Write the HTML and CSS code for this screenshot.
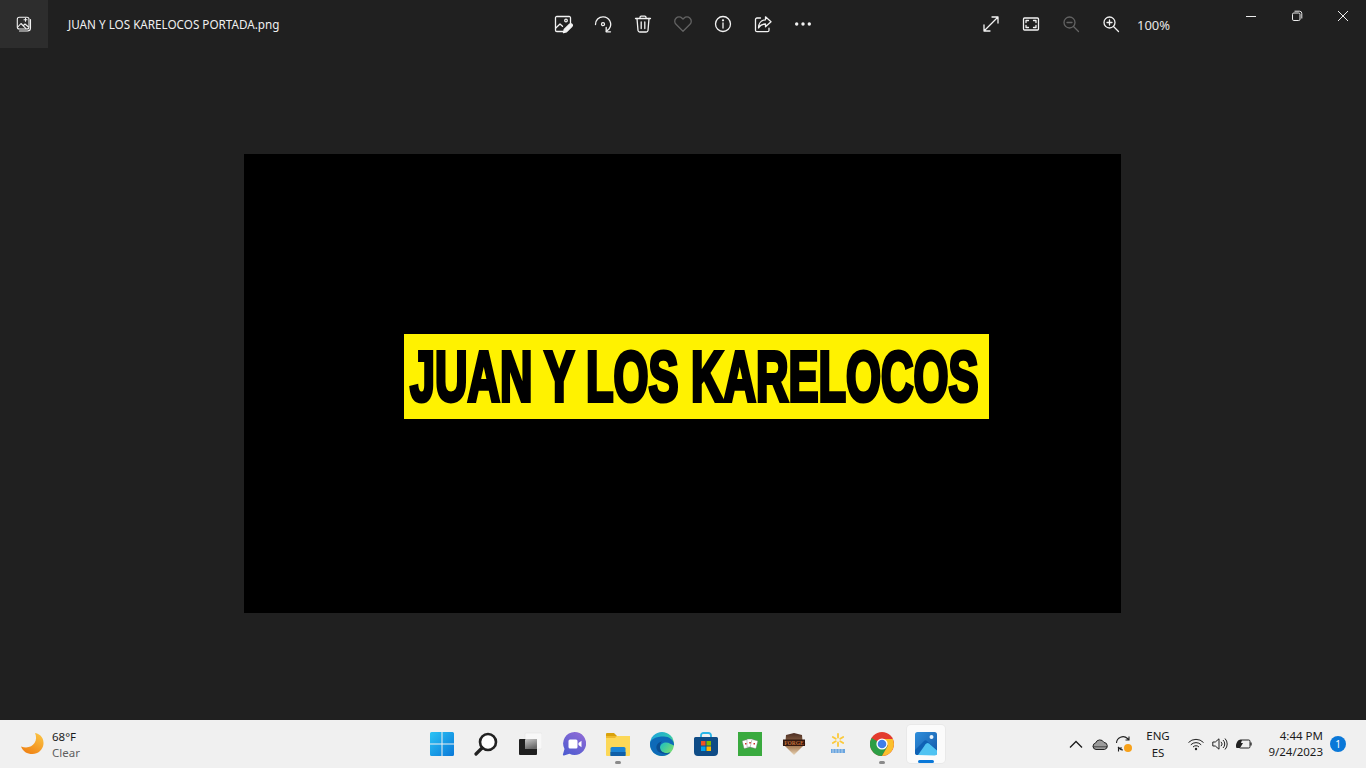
FILE: index.html
```html
<!DOCTYPE html>
<html lang="en">

<head>
  <meta charset="UTF-8" />
  <title>JUAN Y LOS KARELOCOS PORTADA.png</title>
  <link rel="stylesheet" href="styles.css">
</head>

<body>
  <div class="window">
    <header class="titlebar">
      <div class="app-icon">
        <svg width="20" height="20" viewBox="0 0 20 20" class="line small">
          <rect x="3.300" y="3.300" width="11.700" height="11.700" rx="2" />
          <path d="M3.800 13l3.200-3.500 5 5.200M9.500 11.500l1.500-1.500 3.500 3" />
          <path d="M11.500 4.200v3M10 5.700h3" />
          <path d="M5.500 17h8a3 3 0 0 0 3-3V5.500" />
        </svg>
      </div>
      <div class="file-name">JUAN Y LOS KARELOCOS PORTADA.png</div>

      <div class="tools">
        <button class="tool">
          <svg width="20" height="20" viewBox="0 0 20 20" class="line">
            <path d="M10 17.500H3.800a1.300 1.300 0 0 1-1.300-1.300V3.800a1.300 1.300 0 0 1 1.300-1.300h12.400a1.300 1.300 0 0 1 1.300 1.300V9" />
            <path d="M2.800 14l4.200-4 2.500 2.300" />
            <circle cx="13" cy="6.500" r="1.300" />
            <path d="M10.500 18.500l.7-3 5.300-5.300a1.500 1.500 0 0 1 2.300 2.300l-5.300 5.300z" fill="#f2f2f2" />
          </svg>
        </button>
        <button class="tool">
          <svg width="20" height="20" viewBox="0 0 20 20" class="line">
            <path d="M2.500 10.500A7.500 7.500 0 0 1 10 2.800a7.500 7.500 0 0 1 6 12.200l-2.600 2.300" />
            <path d="M13.200 13.500v4.300h4.300" />
            <circle cx="10" cy="10.200" r="1.500" />
          </svg>
        </button>
        <button class="tool">
          <svg width="20" height="20" viewBox="0 0 20 20" class="line">
            <path d="M2.500 4.500h15M7 4.500V3.300a1.200 1.200 0 0 1 1.200-1.200h3.600A1.200 1.200 0 0 1 13 3.300v1.200" />
            <path d="M4 4.500l1 12a1.800 1.800 0 0 0 1.800 1.500h6.400a1.800 1.800 0 0 0 1.800-1.500l1-12" />
            <path d="M8.200 8v6.500M11.800 8v6.500" />
          </svg>
        </button>
        <button class="tool">
          <svg width="20" height="20" viewBox="0 0 20 20" class="line dim">
            <path d="M10 17.300L3 10.300a4.300 4.300 0 0 1 0-6.100 4.300 4.300 0 0 1 6.100 0l.9.900.9-.9a4.300 4.300 0 0 1 6.100 0 4.300 4.300 0 0 1 0 6.100z" />
          </svg>
        </button>
        <button class="tool">
          <svg width="20" height="20" viewBox="0 0 20 20" class="line">
            <circle cx="10" cy="10" r="7.500" />
            <path d="M10 9v5" />
            <circle cx="10" cy="6.300" r=".5" />
          </svg>
        </button>
        <button class="tool">
          <svg width="20" height="20" viewBox="0 0 20 20" class="line">
            <path d="M7.500 4H4a1.500 1.500 0 0 0-1.500 1.500v10.700A1.500 1.500 0 0 0 4 17.700h10.500a1.500 1.500 0 0 0 1.500-1.500v-2" />
            <path d="M12.500 2.800l5.500 5-5.500 5V10c-3 0-5.300.800-7 4 0-4.500 2.500-8 7-8.200z" />
          </svg>
        </button>
        <button class="tool">
          <svg width="20" height="20" viewBox="0 0 20 20">
            <circle cx="3.700" cy="10" r="1.700" fill="#f2f2f2" />
            <circle cx="10" cy="10" r="1.700" fill="#f2f2f2" />
            <circle cx="16.300" cy="10" r="1.700" fill="#f2f2f2" />
          </svg>
        </button>
      </div>

      <div class="view-tools">
        <button class="tool">
          <svg width="20" height="20" viewBox="0 0 20 20" class="line">
            <path d="M3 17L17 3M11 3h6v6M3 11v6h6" />
          </svg>
        </button>
        <button class="tool">
          <svg width="20" height="20" viewBox="0 0 20 20" class="line">
            <rect x="2.500" y="4" width="15" height="12" rx="1" />
            <path d="M5 8.500V6.500h2.500M12.500 6.500H15v2M15 11.500v2h-2.500M7.500 13.500H5v-2" />
          </svg>
        </button>
        <button class="tool">
          <svg width="20" height="20" viewBox="0 0 20 20" class="line dim">
            <circle cx="8.500" cy="8.500" r="5.500" />
            <path d="M12.500 12.500l5 5M6 8.500h5" />
          </svg>
        </button>
        <button class="tool">
          <svg width="20" height="20" viewBox="0 0 20 20" class="line">
            <circle cx="8.500" cy="8.500" r="5.500" />
            <path d="M12.500 12.500l5 5M6 8.500h5M8.500 6v5" />
          </svg>
        </button>
        <span class="zoom-level">100%</span>
      </div>

      <div class="window-controls">
        <button class="win-btn">
          <svg width="12" height="12" viewBox="0 0 12 12" class="thin"><path d="M1 6.500h10" /></svg>
        </button>
        <button class="win-btn">
          <svg width="12" height="12" viewBox="0 0 12 12" class="thin">
            <rect x="1.500" y="3" width="7.500" height="7.500" rx="1.300" />
            <path d="M3.500 1.200h5a2.300 2.300 0 0 1 2.300 2.300v5" />
          </svg>
        </button>
        <button class="win-btn">
          <svg width="12" height="12" viewBox="0 0 12 12" class="thin"><path d="M1 1l10 10M11 1L1 11" /></svg>
        </button>
      </div>
    </header>

    <main class="viewer">
      <div class="picture">
        <div class="banner"><span class="banner-text">JUAN Y LOS KARELOCOS</span></div>
      </div>
    </main>

    <footer class="taskbar">
      <div class="weather">
        <svg width="24" height="24" viewBox="0 0 24 24">
          <defs>
            <linearGradient id="moon" x1="0.800" y1="0" x2="0.200" y2="1">
              <stop offset="0" stop-color="#fbc343" />
              <stop offset="1" stop-color="#ef7f12" />
            </linearGradient>
          </defs>
          <path d="M15 1c6 1 9 6 8.500 11-.7 6-5.500 10-11 10C7 22 3 19.500 1 14.500c6 2 11 .5 13.500-3.500C16.500 8 16.500 4.500 15 1z" fill="url(#moon)" />
        </svg>
        <div class="weather-text">
          <span class="temp">68°F</span>
          <span class="cond">Clear</span>
        </div>
      </div>

      <div class="apps">
        <div class="app">
          <svg width="24" height="24" viewBox="0 0 24 24">
            <defs>
              <linearGradient id="win" x1="0" y1="0" x2="1" y2="1">
                <stop offset="0" stop-color="#2bc4f5" />
                <stop offset="1" stop-color="#0a78d8" />
              </linearGradient>
            </defs>
            <path d="M1.500 0H11.500V11.500H0V1.500A1.500 1.500 0 0 1 1.500 0zM12.500 0H22.500A1.500 1.500 0 0 1 24 1.500V11.500H12.500zM0 12.500H11.500V24H1.500A1.500 1.500 0 0 1 0 22.500zM12.500 12.500H24V22.500A1.500 1.500 0 0 1 22.500 24H12.500z" fill="url(#win)" />
          </svg>
        </div>
        <div class="app">
          <svg width="24" height="24" viewBox="0 0 24 24">
            <circle cx="14" cy="10" r="8" fill="#fff" stroke="#222" stroke-width="2.600" />
            <path d="M8 16l-6 6" stroke="#222" stroke-width="3.200" stroke-linecap="round" />
          </svg>
        </div>
        <div class="app">
          <svg width="24" height="24" viewBox="0 0 24 24">
            <defs>
              <linearGradient id="task" x1="0" y1="0" x2="0.400" y2="1">
                <stop offset="0" stop-color="#c9c9c9" />
                <stop offset="1" stop-color="#6a6a6a" />
              </linearGradient>
            </defs>
            <rect x="7" y="1" width="17" height="16" rx="1" fill="#f8f8f8" stroke="#e4e4e4" stroke-width=".6" />
            <rect x="1" y="7" width="18" height="16" rx="1" fill="#1f1f1f" />
            <path d="M7 8a1 1 0 0 1 1-1h11v10H7z" fill="url(#task)" />
          </svg>
        </div>
        <div class="app">
          <svg width="24" height="24" viewBox="0 0 24 24">
            <defs>
              <linearGradient id="chat" x1="0.800" y1="0" x2="0.200" y2="1">
                <stop offset="0" stop-color="#8f6bd6" />
                <stop offset="1" stop-color="#4f5cd0" />
              </linearGradient>
            </defs>
            <path d="M12.500 0a11.500 11.500 0 1 1-5 21.800L2 23.500c-.8.200-1.300-.4-1.100-1.100L2.500 17A11.500 11.500 0 0 1 12.500 0z" fill="url(#chat)" />
            <rect x="6.500" y="7.500" width="9" height="9" rx="1.500" fill="#fff" />
            <path d="M16.500 11l3-2.300v6.600l-3-2.300z" fill="#fff" />
          </svg>
        </div>
        <div class="app running">
          <svg width="24" height="24" viewBox="0 0 24 24">
            <path d="M0 2a1 1 0 0 1 1-1h7l3 3h-11z" fill="#d9a20c" />
            <path d="M0 4h24v19a1 1 0 0 1-1 1H1a1 1 0 0 1-1-1z" fill="#fcd858" />
            <path d="M0 4h11l-2 2H0z" fill="#eeba2c" />
            <rect x="4.500" y="15" width="15" height="9" rx="1.500" fill="#1a83d4" />
            <rect x="4.500" y="20" width="15" height="4" fill="#0f5fa8" />
          </svg>
        </div>
        <div class="app">
          <svg width="24" height="24" viewBox="0 0 24 24">
            <defs>
              <linearGradient id="edge" x1="0" y1="0" x2="1" y2="0.800">
                <stop offset="0" stop-color="#1b9de2" />
                <stop offset="0.600" stop-color="#30c6b0" />
                <stop offset="1" stop-color="#7fe06a" />
              </linearGradient>
            </defs>
            <circle cx="12" cy="12" r="12" fill="url(#edge)" />
            <path d="M0 12C0 19 5.500 24 12 24c3.500 0 6.500-1.300 8.500-3.500-5 2-10.500-.5-10.500-5 0-3 3-5 6-5 3.500 0 5 2 8 3 .5-5-4.500-9-10-9C6 4.500 0 7 0 12z" fill="#0e6ab8" />
            <path d="M10 15.500c0 3 2.500 5.500 6 5.500 2 0 3.500-.5 4.500-.5-3 1.500-8 2-11.500-.5-3-2-3.500-6-1-8.500 1-1 2.500-1.800 4-2-1.500 1.200-2 3.500-2 6z" fill="#0a4f93" />
          </svg>
        </div>
        <div class="app">
          <svg width="24" height="24" viewBox="0 0 24 24">
            <path d="M7 6V3.500A2.500 2.500 0 0 1 9.500 1h5A2.500 2.500 0 0 1 17 3.500V6" fill="none" stroke="#29b6e8" stroke-width="1.800" />
            <path d="M0 6.500A1.500 1.500 0 0 1 1.500 5h21A1.500 1.500 0 0 1 24 6.500V20a4 4 0 0 1-4 4H4a4 4 0 0 1-4-4z" fill="#0f4c86" />
            <rect x="7" y="9" width="4.500" height="4.500" fill="#f25022" />
            <rect x="12.500" y="9" width="4.500" height="4.500" fill="#7fba00" />
            <rect x="7" y="14.500" width="4.500" height="4.500" fill="#00a4ef" />
            <rect x="12.500" y="14.500" width="4.500" height="4.500" fill="#ffb900" />
          </svg>
        </div>
        <div class="app">
          <svg width="24" height="24" viewBox="0 0 24 24">
            <rect width="24" height="24" fill="#3aaa3f" />
            <g stroke="#777" stroke-width=".4">
              <rect x="5" y="8" width="6" height="8" rx=".6" fill="#fff" transform="rotate(-14 8 12)" />
              <rect x="9" y="7" width="6" height="8" rx=".6" fill="#fff" />
              <rect x="13" y="8" width="6" height="8" rx=".6" fill="#fff" transform="rotate(14 16 12)" />
            </g>
            <path d="M7 11h1.500v1.500H7zM11.300 10h1.500v1.500h-1.500zM15.500 11H17v1.500h-1.500z" fill="#c9302c" />
          </svg>
        </div>
        <div class="app">
          <svg width="24" height="24" viewBox="0 0 24 24">
            <defs>
              <linearGradient id="forge" x1="0" y1="0" x2="0" y2="1">
                <stop offset="0" stop-color="#4a2c22" />
                <stop offset="0.600" stop-color="#a87c55" />
                <stop offset="1" stop-color="#e8d3b4" />
              </linearGradient>
            </defs>
            <path d="M4 3l8-2 8 2 .5 6 3 3-3.500 3-8 8-8-8L.5 12l3-3z" fill="url(#forge)" />
            <rect x="1" y="7.500" width="22" height="6.500" fill="#33180f" />
            <text x="12" y="12.800" class="forge-text">FORGE</text>
          </svg>
        </div>
        <div class="app">
          <svg width="24" height="24" viewBox="0 0 24 24">
            <path d="M12 2v3.500M12 10.500V14M6.800 5l3 1.800M17.200 5l-3 1.800M6.800 11l3-1.800M17.200 11l-3-1.800" stroke="#fbc93a" stroke-width="1.800" stroke-linecap="round" />
            <rect x="5" y="17" width="14" height="4" fill="#6aa5e0" />
            <path d="M7 17v4M10 17v4M13 17v4M16 17v4" stroke="#f0f0f0" stroke-width=".6" />
          </svg>
        </div>
        <div class="app running">
          <svg width="24" height="24" viewBox="0 0 24 24">
            <circle cx="12" cy="12" r="12" fill="#e33b2e" />
            <path d="M12 12L1.600 6A12 12 0 0 0 12 24l6-10.400z" fill="#2d9e45" />
            <path d="M12 7h10.800A12 12 0 0 1 12 24l6-10.400z" fill="#fbc02d" />
            <circle cx="12" cy="12" r="5.600" fill="#fff" />
            <circle cx="12" cy="12" r="4.300" fill="#3f7ee8" />
          </svg>
        </div>
        <div class="app active">
          <svg width="24" height="24" viewBox="0 0 24 24">
            <defs>
              <linearGradient id="photo" x1="0" y1="0" x2="1" y2="1">
                <stop offset="0" stop-color="#2f8fdc" />
                <stop offset="1" stop-color="#1559a8" />
              </linearGradient>
            </defs>
            <rect x="1" y="0" width="22" height="23" rx="2.500" fill="url(#photo)" />
            <circle cx="17.500" cy="5" r="2" fill="#e8f4fc" />
            <path d="M1 18l9-9c1-1 2-1 3 0l10 9v2.500a2.500 2.500 0 0 1-2.500 2.500h-18A2.500 2.500 0 0 1 1 20.500z" fill="#0f62b5" />
            <path d="M4 23l6-8.500c1-1.500 2.500-5 5-3l8 7v2.500a2.500 2.500 0 0 1-2.500 2.500z" fill="#4fc3f2" />
          </svg>
        </div>
      </div>

      <div class="tray">
        <svg class="tray-chevron" width="16" height="16" viewBox="0 0 16 16">
          <path d="M2 11.500L8 5.500l6 6" fill="none" stroke="#1b1b1b" stroke-width="1.300" />
        </svg>
        <svg class="tray-cloud" width="16" height="16" viewBox="0 0 16 16">
          <path d="M4 13.500a3.300 3.300 0 0 1-.4-6.500 4.500 4.500 0 0 1 8.300-.6A3.600 3.600 0 0 1 12.500 13.500z" fill="#9b9b9b" stroke="#222" stroke-width="1" />
          <path d="M.8 10.800h14.500" stroke="#222" stroke-width=".7" />
        </svg>
        <svg class="tray-sync" width="18" height="18" viewBox="0 0 18 18">
          <path d="M1.500 8A6.500 6.500 0 0 1 12.500 3.500L14 5M14 1.500V5h-3.500" fill="none" stroke="#222" stroke-width="1.100" />
          <path d="M3 12l1.500 1.500A5 5 0 0 0 8 15M3.500 16.500V13H7" fill="none" stroke="#222" stroke-width="1.100" />
          <circle cx="13" cy="13" r="4" fill="#f7a11a" />
        </svg>
        <div class="lang"><span>ENG</span><span>ES</span></div>
        <svg class="tray-wifi" width="16" height="16" viewBox="0 0 16 16">
          <path d="M.5 6.500a10.500 10.500 0 0 1 15 0M2.800 8.800a7.300 7.300 0 0 1 10.400 0M5 11a4.200 4.200 0 0 1 6 0" fill="none" stroke="#222" stroke-width="1" />
          <circle cx="8" cy="13" r="1.200" fill="#222" />
        </svg>
        <svg class="tray-sound" width="16" height="16" viewBox="0 0 16 16">
          <path d="M.8 6h2.500L7 2.800v10.400L3.300 10H.8z" fill="none" stroke="#222" stroke-width="1" />
          <path d="M9 5.800a3 3 0 0 1 0 4.400M11 4a5.500 5.500 0 0 1 0 8M13 2.500a8 8 0 0 1 0 11" fill="none" stroke="#222" stroke-width="1" />
        </svg>
        <svg class="tray-battery" width="18" height="16" viewBox="0 0 18 16">
          <rect x="4" y="4" width="11" height="8" rx="1.300" fill="none" stroke="#222" stroke-width="1" />
          <path d="M16 6.500v3" stroke="#222" stroke-width="1.300" />
          <path d="M4 4h3l-1 3h2l-3 5H1.500C.5 10 1 6 4 4z" fill="#222" />
        </svg>
        <div class="clock"><span>4:44 PM</span><span>9/24/2023</span></div>
        <div class="badge">1</div>
      </div>
    </footer>
  </div>
</body>

</html>
```

FILE: styles.css
```css
* {
  box-sizing: border-box;
}

html,
body {
  margin: 0;
  height: 100%;
  overflow: hidden;
}

body {
  background: #202020;
  font-family: "Noto Sans", "Open Sans", sans-serif;
}

.window {
  width: 1366px;
  height: 768px;
  display: flex;
  flex-direction: column;
}

svg {
  display: block;
  flex: none;
}

.line {
  fill: none;
  stroke: #f2f2f2;
  stroke-width: 1.300;
  stroke-linecap: round;
  stroke-linejoin: round;
}

.line.small {
  stroke-width: 1.100;
}

.line.dim {
  stroke: #636363;
}

.thin {
  fill: none;
  stroke: #ececec;
  stroke-width: 1;
}

/* title bar */
.titlebar {
  height: 48px;
  display: flex;
  background: #202020;
  color: #f0f0f0;
}

.app-icon {
  width: 48px;
  height: 48px;
  display: flex;
  align-items: center;
  justify-content: center;
  background: #2d2d2d;
}

.file-name {
  width: 495px;
  padding-left: 20px;
  font-size: 11.700px;
  line-height: 49px;
  white-space: nowrap;
}

.tool {
  width: 40px;
  height: 48px;
  padding: 0;
  border: none;
  background: none;
  display: flex;
  align-items: center;
  justify-content: center;
}

.tools {
  display: flex;
  width: 428px;
}

.view-tools {
  display: flex;
  width: 257px;
}

.zoom-level {
  margin-left: 6px;
  font-size: 13px;
  line-height: 50px;
  color: #e6e6e6;
}

.window-controls {
  display: flex;
  margin-left: auto;
  align-items: flex-start;
}

.win-btn {
  width: 46px;
  height: 32px;
  padding: 0;
  border: none;
  background: none;
  display: flex;
  align-items: center;
  justify-content: center;
}

/* picture */
.viewer {
  flex: 1;
  display: flex;
  align-items: center;
  justify-content: center;
  padding: 0 1px 1px 0;
  background: #202020;
}

.picture {
  width: 877px;
  height: 459px;
  padding: 180px 0 0 160px;
  background: #000;
}

.banner {
  width: 585px;
  height: 85px;
  padding-left: 6px;
  overflow: hidden;
  background: #fff200;
  color: #000;
  font-family: "Liberation Sans", sans-serif;
  font-weight: 700;
  font-size: 70px;
  line-height: 87px;
  white-space: nowrap;
}

.banner-text {
  display: inline-block;
  transform: scaleX(0.643);
  transform-origin: left center;
  -webkit-text-stroke: 4px #000;
}

/* task bar */
.taskbar {
  height: 48px;
  display: flex;
  align-items: center;
  background: #f0f0f0;
  color: #1b1b1b;
}

.weather {
  width: 420px;
  padding-left: 20px;
  display: flex;
  align-items: center;
  gap: 8px;
}

.weather-text {
  display: flex;
  flex-direction: column;
  padding-top: 1px;
  font-size: 11.500px;
  line-height: 16px;
}

.cond {
  color: #5f5f5f;
}

.apps {
  display: flex;
}

.app {
  position: relative;
  width: 44px;
  height: 38px;
  display: flex;
  align-items: center;
  justify-content: center;
}

.app.running::after,
.app.active::after {
  content: "";
  position: absolute;
  left: 50%;
  bottom: -1px;
  width: 6px;
  height: 3px;
  margin-left: -3px;
  border-radius: 2px;
  background: #8a8a8a;
}

.app.active {
  width: 38px;
  margin: 0 3px;
  background: #fbfbfb;
  border-radius: 4px;
  box-shadow: 0 0 0 1px #e9e9e9;
}

.app.active::after {
  bottom: 0;
  width: 16px;
  margin-left: -8px;
  background: #0a78d8;
}

.forge-text {
  font-family: "Liberation Serif", serif;
  font-size: 5.500px;
  font-weight: 700;
  text-anchor: middle;
  fill: #c5713a;
}

.tray {
  flex: 1;
  display: flex;
  align-items: center;
  font-size: 11.500px;
}

.tray-chevron {
  margin-left: 120px;
}

.tray-cloud {
  margin-left: 8px;
}

.tray-sync {
  margin-left: 7px;
}

.lang {
  width: 40px;
  margin-left: 5px;
  display: flex;
  flex-direction: column;
  align-items: center;
  line-height: 17px;
}

.tray-wifi {
  margin-left: 10px;
}

.tray-sound {
  margin-left: 8px;
}

.tray-battery {
  margin-left: 7px;
}

.clock {
  width: 61px;
  margin-left: 9px;
  display: flex;
  flex-direction: column;
  align-items: flex-end;
  line-height: 16px;
}

.badge {
  width: 16px;
  height: 16px;
  margin-left: 7px;
  border-radius: 50%;
  background: #0a78d8;
  color: #fff;
  font-size: 10px;
  line-height: 16px;
  text-align: center;
}
```
